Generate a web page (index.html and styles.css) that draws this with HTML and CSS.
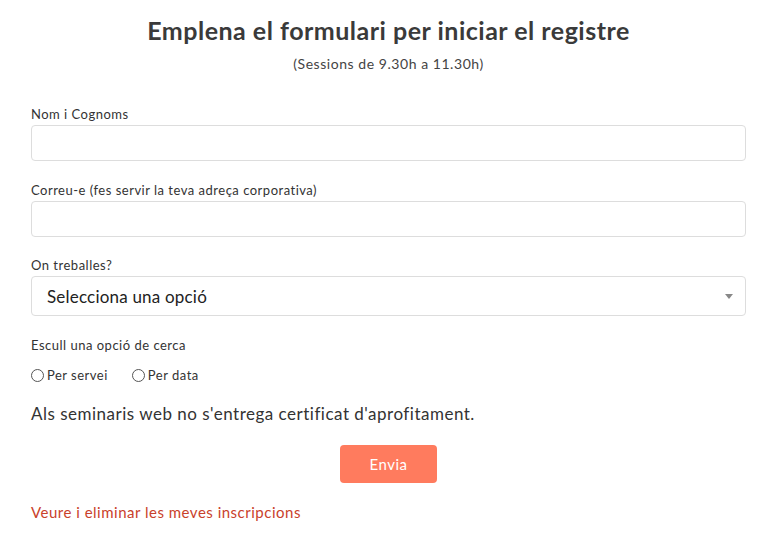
FILE: index.html
```html
<!DOCTYPE html>
<html lang="ca">
<head>
<meta charset="utf-8">
<title>Registre</title>
<link rel="stylesheet" href="styles.css">
</head>
<body>
<main class="page">
  <h1 class="title">Emplena el formulari per iniciar el registre</h1>
  <p class="subtitle">(Sessions de 9.30h a 11.30h)</p>
  <form class="form">
    <div class="field">
      <label class="label">Nom i Cognoms</label>
      <input class="input" type="text">
    </div>
    <div class="field field-tight">
      <label class="label">Correu-e (fes servir la teva adreça corporativa)</label>
      <input class="input" type="text">
    </div>
    <div class="field">
      <label class="label">On treballes?</label>
      <div class="select">
        <span>Selecciona una opció</span>
        <span class="caret"></span>
      </div>
    </div>
    <div class="field">
      <span class="label">Escull una opció de cerca</span>
      <div class="radios">
        <label class="radio"><span class="dot"></span>Per servei</label>
        <label class="radio"><span class="dot"></span>Per data</label>
      </div>
    </div>
    <p class="note">Als seminaris web no s'entrega certificat d'aprofitament.</p>
    <div class="actions"><button type="button" class="btn">Envia</button></div>
    <a class="link" href="#">Veure i eliminar les meves inscripcions</a>
  </form>
</main>
</body>
</html>
```
FILE: styles.css
```css
* { box-sizing: border-box; }
html, body { margin: 0; background: #fff; }
body {
  font-family: "Lato", "Open Sans", sans-serif;
  color: #333;
}
.page {
  padding: 15px 32px 0 31px;
}
.title {
  margin: 0;
  text-align: center;
  font-size: 25px;
  font-weight: 700;
  color: #3a3a3a;
  line-height: 30px;
  letter-spacing: 0.5px;
}
.subtitle {
  margin: 10px 0 0;
  text-align: center;
  font-size: 14px;
  color: #444;
  line-height: 18px;
  letter-spacing: 0.55px;
}
.form {
  margin-top: 33px;
  display: flex;
  flex-direction: column;
}
.field {
  display: flex;
  flex-direction: column;
  margin-bottom: 21px;
}
.field-tight {
  margin-bottom: 20px;
}
.label {
  font-size: 13px;
  color: #333;
  line-height: 16px;
  margin-bottom: 3px;
  letter-spacing: 0.5px;
}
.input {
  height: 36px;
  border: 1px solid #ddd;
  border-radius: 4px;
  background: #fff;
  font: inherit;
}
.select {
  height: 40px;
  border: 1px solid #ddd;
  border-radius: 4px;
  display: flex;
  align-items: center;
  justify-content: space-between;
  padding: 0 12px 0 15px;
  font-size: 17px;
  color: #222;
  letter-spacing: 0.2px;
}
.caret {
  width: 0; height: 0;
  border-left: 4px solid transparent;
  border-right: 4px solid transparent;
  border-top: 5px solid #888;
}
.radios {
  display: flex;
  gap: 24px;
  margin-top: 11px;
}
.radio {
  display: flex;
  align-items: center;
  font-size: 13px;
  color: #333;
  letter-spacing: 0.5px;
}
.dot {
  width: 13px; height: 13px;
  border: 1px solid #555;
  border-radius: 50%;
  margin-right: 3px;
}
.note {
  margin: -1px 0 0;
  font-size: 17px;
  color: #333;
  line-height: 22px;
  letter-spacing: 0.5px;
}
.actions {
  display: flex;
  justify-content: center;
  margin-top: 20px;
}
.btn {
  width: 97px;
  height: 38px;
  border: 0;
  border-radius: 4px;
  background: #ff7b5e;
  color: #fff;
  font: inherit;
  font-size: 15px;
  letter-spacing: 0.5px;
}
.link {
  margin-top: 20px;
  font-size: 15px;
  color: #c9412b;
  text-decoration: none;
  letter-spacing: 0.5px;
}
```
